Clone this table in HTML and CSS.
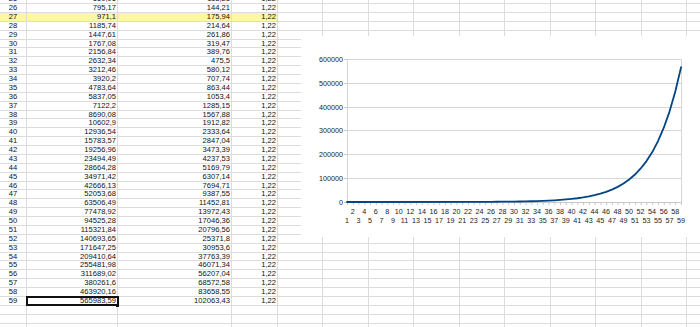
FILE: index.html
```html
<!DOCTYPE html>
<html>
<head>
<meta charset="utf-8">
<link rel="stylesheet" href="styles.css">
</head>
<body>
<div class="sheet">
<div class="r"><span class="h">25</span><span class="a">650,96</span><span class="b">118,21</span><span class="c">1,22</span><i></i><i></i><i></i><i></i><i></i><i></i><i></i><i></i><i></i><i></i></div>
<div class="r"><span class="h">26</span><span class="a">795,17</span><span class="b">144,21</span><span class="c">1,22</span><i></i><i></i><i></i><i></i><i></i><i></i><i></i><i></i><i></i><i></i></div>
<div class="r hl"><span class="h">27</span><span class="a">971,1</span><span class="b">175,94</span><span class="c">1,22</span><i></i><i></i><i></i><i></i><i></i><i></i><i></i><i></i><i></i><i></i></div>
<div class="r"><span class="h">28</span><span class="a">1185,74</span><span class="b">214,64</span><span class="c">1,22</span><i></i><i></i><i></i><i></i><i></i><i></i><i></i><i></i><i></i><i></i></div>
<div class="r"><span class="h">29</span><span class="a">1447,61</span><span class="b">261,86</span><span class="c">1,22</span><i></i><i></i><i></i><i></i><i></i><i></i><i></i><i></i><i></i><i></i></div>
<div class="r"><span class="h">30</span><span class="a">1767,08</span><span class="b">319,47</span><span class="c">1,22</span><i></i><i></i><i></i><i></i><i></i><i></i><i></i><i></i><i></i><i></i></div>
<div class="r"><span class="h">31</span><span class="a">2156,84</span><span class="b">389,76</span><span class="c">1,22</span><i></i><i></i><i></i><i></i><i></i><i></i><i></i><i></i><i></i><i></i></div>
<div class="r"><span class="h">32</span><span class="a">2632,34</span><span class="b">475,5</span><span class="c">1,22</span><i></i><i></i><i></i><i></i><i></i><i></i><i></i><i></i><i></i><i></i></div>
<div class="r"><span class="h">33</span><span class="a">3212,46</span><span class="b">580,12</span><span class="c">1,22</span><i></i><i></i><i></i><i></i><i></i><i></i><i></i><i></i><i></i><i></i></div>
<div class="r"><span class="h">34</span><span class="a">3920,2</span><span class="b">707,74</span><span class="c">1,22</span><i></i><i></i><i></i><i></i><i></i><i></i><i></i><i></i><i></i><i></i></div>
<div class="r"><span class="h">35</span><span class="a">4783,64</span><span class="b">863,44</span><span class="c">1,22</span><i></i><i></i><i></i><i></i><i></i><i></i><i></i><i></i><i></i><i></i></div>
<div class="r"><span class="h">36</span><span class="a">5837,05</span><span class="b">1053,4</span><span class="c">1,22</span><i></i><i></i><i></i><i></i><i></i><i></i><i></i><i></i><i></i><i></i></div>
<div class="r"><span class="h">37</span><span class="a">7122,2</span><span class="b">1285,15</span><span class="c">1,22</span><i></i><i></i><i></i><i></i><i></i><i></i><i></i><i></i><i></i><i></i></div>
<div class="r"><span class="h">38</span><span class="a">8690,08</span><span class="b">1567,88</span><span class="c">1,22</span><i></i><i></i><i></i><i></i><i></i><i></i><i></i><i></i><i></i><i></i></div>
<div class="r"><span class="h">39</span><span class="a">10602,9</span><span class="b">1912,82</span><span class="c">1,22</span><i></i><i></i><i></i><i></i><i></i><i></i><i></i><i></i><i></i><i></i></div>
<div class="r"><span class="h">40</span><span class="a">12936,54</span><span class="b">2333,64</span><span class="c">1,22</span><i></i><i></i><i></i><i></i><i></i><i></i><i></i><i></i><i></i><i></i></div>
<div class="r"><span class="h">41</span><span class="a">15783,57</span><span class="b">2847,04</span><span class="c">1,22</span><i></i><i></i><i></i><i></i><i></i><i></i><i></i><i></i><i></i><i></i></div>
<div class="r"><span class="h">42</span><span class="a">19256,96</span><span class="b">3473,39</span><span class="c">1,22</span><i></i><i></i><i></i><i></i><i></i><i></i><i></i><i></i><i></i><i></i></div>
<div class="r"><span class="h">43</span><span class="a">23494,49</span><span class="b">4237,53</span><span class="c">1,22</span><i></i><i></i><i></i><i></i><i></i><i></i><i></i><i></i><i></i><i></i></div>
<div class="r"><span class="h">44</span><span class="a">28664,28</span><span class="b">5169,79</span><span class="c">1,22</span><i></i><i></i><i></i><i></i><i></i><i></i><i></i><i></i><i></i><i></i></div>
<div class="r"><span class="h">45</span><span class="a">34971,42</span><span class="b">6307,14</span><span class="c">1,22</span><i></i><i></i><i></i><i></i><i></i><i></i><i></i><i></i><i></i><i></i></div>
<div class="r"><span class="h">46</span><span class="a">42666,13</span><span class="b">7694,71</span><span class="c">1,22</span><i></i><i></i><i></i><i></i><i></i><i></i><i></i><i></i><i></i><i></i></div>
<div class="r"><span class="h">47</span><span class="a">52053,68</span><span class="b">9387,55</span><span class="c">1,22</span><i></i><i></i><i></i><i></i><i></i><i></i><i></i><i></i><i></i><i></i></div>
<div class="r"><span class="h">48</span><span class="a">63506,49</span><span class="b">11452,81</span><span class="c">1,22</span><i></i><i></i><i></i><i></i><i></i><i></i><i></i><i></i><i></i><i></i></div>
<div class="r"><span class="h">49</span><span class="a">77478,92</span><span class="b">13972,43</span><span class="c">1,22</span><i></i><i></i><i></i><i></i><i></i><i></i><i></i><i></i><i></i><i></i></div>
<div class="r"><span class="h">50</span><span class="a">94525,28</span><span class="b">17046,36</span><span class="c">1,22</span><i></i><i></i><i></i><i></i><i></i><i></i><i></i><i></i><i></i><i></i></div>
<div class="r"><span class="h">51</span><span class="a">115321,84</span><span class="b">20796,56</span><span class="c">1,22</span><i></i><i></i><i></i><i></i><i></i><i></i><i></i><i></i><i></i><i></i></div>
<div class="r"><span class="h">52</span><span class="a">140693,65</span><span class="b">25371,8</span><span class="c">1,22</span><i></i><i></i><i></i><i></i><i></i><i></i><i></i><i></i><i></i><i></i></div>
<div class="r"><span class="h">53</span><span class="a">171647,25</span><span class="b">30953,6</span><span class="c">1,22</span><i></i><i></i><i></i><i></i><i></i><i></i><i></i><i></i><i></i><i></i></div>
<div class="r"><span class="h">54</span><span class="a">209410,64</span><span class="b">37763,39</span><span class="c">1,22</span><i></i><i></i><i></i><i></i><i></i><i></i><i></i><i></i><i></i><i></i></div>
<div class="r"><span class="h">55</span><span class="a">255481,98</span><span class="b">46071,34</span><span class="c">1,22</span><i></i><i></i><i></i><i></i><i></i><i></i><i></i><i></i><i></i><i></i></div>
<div class="r"><span class="h">56</span><span class="a">311689,02</span><span class="b">56207,04</span><span class="c">1,22</span><i></i><i></i><i></i><i></i><i></i><i></i><i></i><i></i><i></i><i></i></div>
<div class="r"><span class="h">57</span><span class="a">380261,6</span><span class="b">68572,58</span><span class="c">1,22</span><i></i><i></i><i></i><i></i><i></i><i></i><i></i><i></i><i></i><i></i></div>
<div class="r"><span class="h">58</span><span class="a">463920,16</span><span class="b">83658,55</span><span class="c">1,22</span><i></i><i></i><i></i><i></i><i></i><i></i><i></i><i></i><i></i><i></i></div>
<div class="r"><span class="h">59</span><span class="a sel">565983,59</span><span class="b">102063,43</span><span class="c">1,22</span><i></i><i></i><i></i><i></i><i></i><i></i><i></i><i></i><i></i><i></i></div>
<div class="r"><span class="h"></span><span class="a"></span><span class="b"></span><span class="c"></span><i></i><i></i><i></i><i></i><i></i><i></i><i></i><i></i><i></i><i></i></div>
<div class="r"><span class="h"></span><span class="a"></span><span class="b"></span><span class="c"></span><i></i><i></i><i></i><i></i><i></i><i></i><i></i><i></i><i></i><i></i></div>
<div class="r"><span class="h"></span><span class="a"></span><span class="b"></span><span class="c"></span><i></i><i></i><i></i><i></i><i></i><i></i><i></i><i></i><i></i><i></i></div>
</div>

<div class="chart">
<svg width="399" height="201" viewBox="0 0 399 201">
<g class="grid">
<line x1="46" y1="23.5" x2="380" y2="23.5"/>
<line x1="46" y1="47.5" x2="380" y2="47.5"/>
<line x1="46" y1="71.5" x2="380" y2="71.5"/>
<line x1="46" y1="94.5" x2="380" y2="94.5"/>
<line x1="46" y1="118.5" x2="380" y2="118.5"/>
<line x1="46" y1="142.5" x2="380" y2="142.5"/>
<line x1="380.5" y1="23" x2="380.5" y2="166"/>
<line x1="46.5" y1="23" x2="46.5" y2="166"/>
</g>
<g class="axis">
<line x1="43" y1="166.5" x2="381" y2="166.5"/>
<line x1="43" y1="23.5" x2="46" y2="23.5"/>
<line x1="43" y1="47.5" x2="46" y2="47.5"/>
<line x1="43" y1="71.5" x2="46" y2="71.5"/>
<line x1="43" y1="94.5" x2="46" y2="94.5"/>
<line x1="43" y1="118.5" x2="46" y2="118.5"/>
<line x1="43" y1="142.5" x2="46" y2="142.5"/>
<path class="ticks" d="M46.5 166v3M52.3 166v3M58 166v3M63.8 166v3M69.5 166v3M75.3 166v3M81.1 166v3M86.8 166v3M92.6 166v3M98.3 166v3M104.1 166v3M109.8 166v3M115.6 166v3M121.4 166v3M127.1 166v3M132.9 166v3M138.6 166v3M144.4 166v3M150.1 166v3M155.9 166v3M161.7 166v3M167.4 166v3M173.2 166v3M178.9 166v3M184.7 166v3M190.5 166v3M196.2 166v3M202 166v3M207.7 166v3M213.5 166v3M219.2 166v3M225 166v3M230.8 166v3M236.5 166v3M242.3 166v3M248 166v3M253.8 166v3M259.5 166v3M265.3 166v3M271.1 166v3M276.8 166v3M282.6 166v3M288.3 166v3M294.1 166v3M299.9 166v3M305.6 166v3M311.4 166v3M317.1 166v3M322.9 166v3M328.6 166v3M334.4 166v3M340.2 166v3M345.9 166v3M351.7 166v3M357.4 166v3M363.2 166v3M369 166v3M374.7 166v3M380.5 166v3"/>
</g>
<g class="ylab">
<text x="42" y="26">600000</text>
<text x="42" y="50">500000</text>
<text x="42" y="74">400000</text>
<text x="42" y="97">300000</text>
<text x="42" y="121">200000</text>
<text x="42" y="145">100000</text>
<text x="42" y="169">0</text>
</g>
<g class="xlab even">
<text x="51.8">2</text><text x="63.3">4</text><text x="74.8">6</text><text x="86.3">8</text><text x="97.8">10</text><text x="109.3">12</text><text x="120.9">14</text><text x="132.4">16</text><text x="143.9">18</text><text x="155.4">20</text><text x="166.9">22</text><text x="178.4">24</text><text x="189.9">26</text><text x="201.5">28</text><text x="213">30</text><text x="224.5">32</text><text x="236">34</text><text x="247.5">36</text><text x="259">38</text><text x="270.5">40</text><text x="282.1">42</text><text x="293.6">44</text><text x="305.1">46</text><text x="316.6">48</text><text x="328.1">50</text><text x="339.6">52</text><text x="351.1">54</text><text x="362.7">56</text><text x="374.2">58</text>
</g>
<g class="xlab odd">
<text x="46">1</text><text x="57.5">3</text><text x="69">5</text><text x="80.6">7</text><text x="92.1">9</text><text x="103.6">11</text><text x="115.1">13</text><text x="126.6">15</text><text x="138.1">17</text><text x="149.6">19</text><text x="161.2">21</text><text x="172.7">23</text><text x="184.2">25</text><text x="195.7">27</text><text x="207.2">29</text><text x="218.7">31</text><text x="230.2">33</text><text x="241.8">35</text><text x="253.3">37</text><text x="264.8">39</text><text x="276.3">41</text><text x="287.8">43</text><text x="299.3">45</text><text x="310.9">47</text><text x="322.4">49</text><text x="333.9">51</text><text x="345.4">53</text><text x="356.9">55</text><text x="368.4">57</text><text x="380">59</text>
</g>
<polyline class="series" points="46,166 184.2,165.85 190,165.81 195.7,165.77 201.5,165.72 207.2,165.65 213,165.58 218.8,165.49 224.6,165.37 230.3,165.23 236.1,165.07 241.8,164.86 247.6,164.61 253.3,164.3 259.1,163.93 264.9,163.47 270.6,162.92 276.4,162.24 282.1,161.41 287.9,160.4 293.6,159.17 299.4,157.67 305.1,155.83 310.9,153.59 316.7,150.86 322.5,147.53 328.2,143.47 334,138.51 339.7,132.47 345.5,125.09 351.3,116.09 357,105.11 362.8,91.71 368.6,75.37 374.3,55.43 380.1,31.11"/>
</svg>
</div>
</body>
</html>
```
FILE: styles.css
```css
* { box-sizing: border-box; }
html, body { margin: 0; padding: 0; background: #fff; }
body {
  width: 700px;
  height: 327px;
  overflow: hidden;
  position: relative;
  font-family: "Liberation Sans", Arial, sans-serif;
  font-size: 7.6px;
  color: #111;
}
.sheet {
  margin-top: -4.875px;
  display: flex;
  flex-direction: column;
}
.r {
  display: flex;
  height: 8.875px;
  line-height: 8px;
  border-bottom: 1px solid #dcdcdc;
}
.r > * {
  flex: none;
  height: 100%;
  border-right: 1px solid #dcdcdc;
  white-space: nowrap;
  font-style: normal;
}
.h { width: 27px; text-align: center; }
.a { width: 91px; text-align: right; padding-right: 1px; }
.b { width: 114px; text-align: right; padding-right: 1px; }
.c { width: 46px; text-align: right; padding-right: 1px; }
.r i { width: 45.44px; }
.hl > .h, .hl > .a, .hl > .b, .hl > .c { background: #fcf7a1; }
.sel {
  position: relative;
  outline: 2px solid #111;
  outline-offset: -1px;
}
.sel::after {
  content: "";
  position: absolute;
  right: -2px;
  bottom: -2px;
  width: 3px;
  height: 3px;
  background: #111;
}
.chart {
  position: absolute;
  left: 301px;
  top: 36px;
  width: 399px;
  height: 201px;
  background: #fff;
}
.chart svg { display: block; }
.grid line { stroke: #d6d6d6; stroke-width: 1; }
.axis line, .ticks { stroke: #c8c8c8; stroke-width: 1; fill: none; }
.ylab text { font-family: "Liberation Sans", Arial, sans-serif; font-size: 7.2px; fill: #222; text-anchor: end; }
.xlab text { font-family: "Liberation Sans", Arial, sans-serif; font-size: 7.2px; fill: #222; text-anchor: middle; }
.xlab.even text { transform: translateY(178px); }
.xlab.odd text { transform: translateY(186.5px); }
.series { fill: none; stroke: #004586; stroke-width: 1.8; stroke-linejoin: round; stroke-linecap: round; }
```
